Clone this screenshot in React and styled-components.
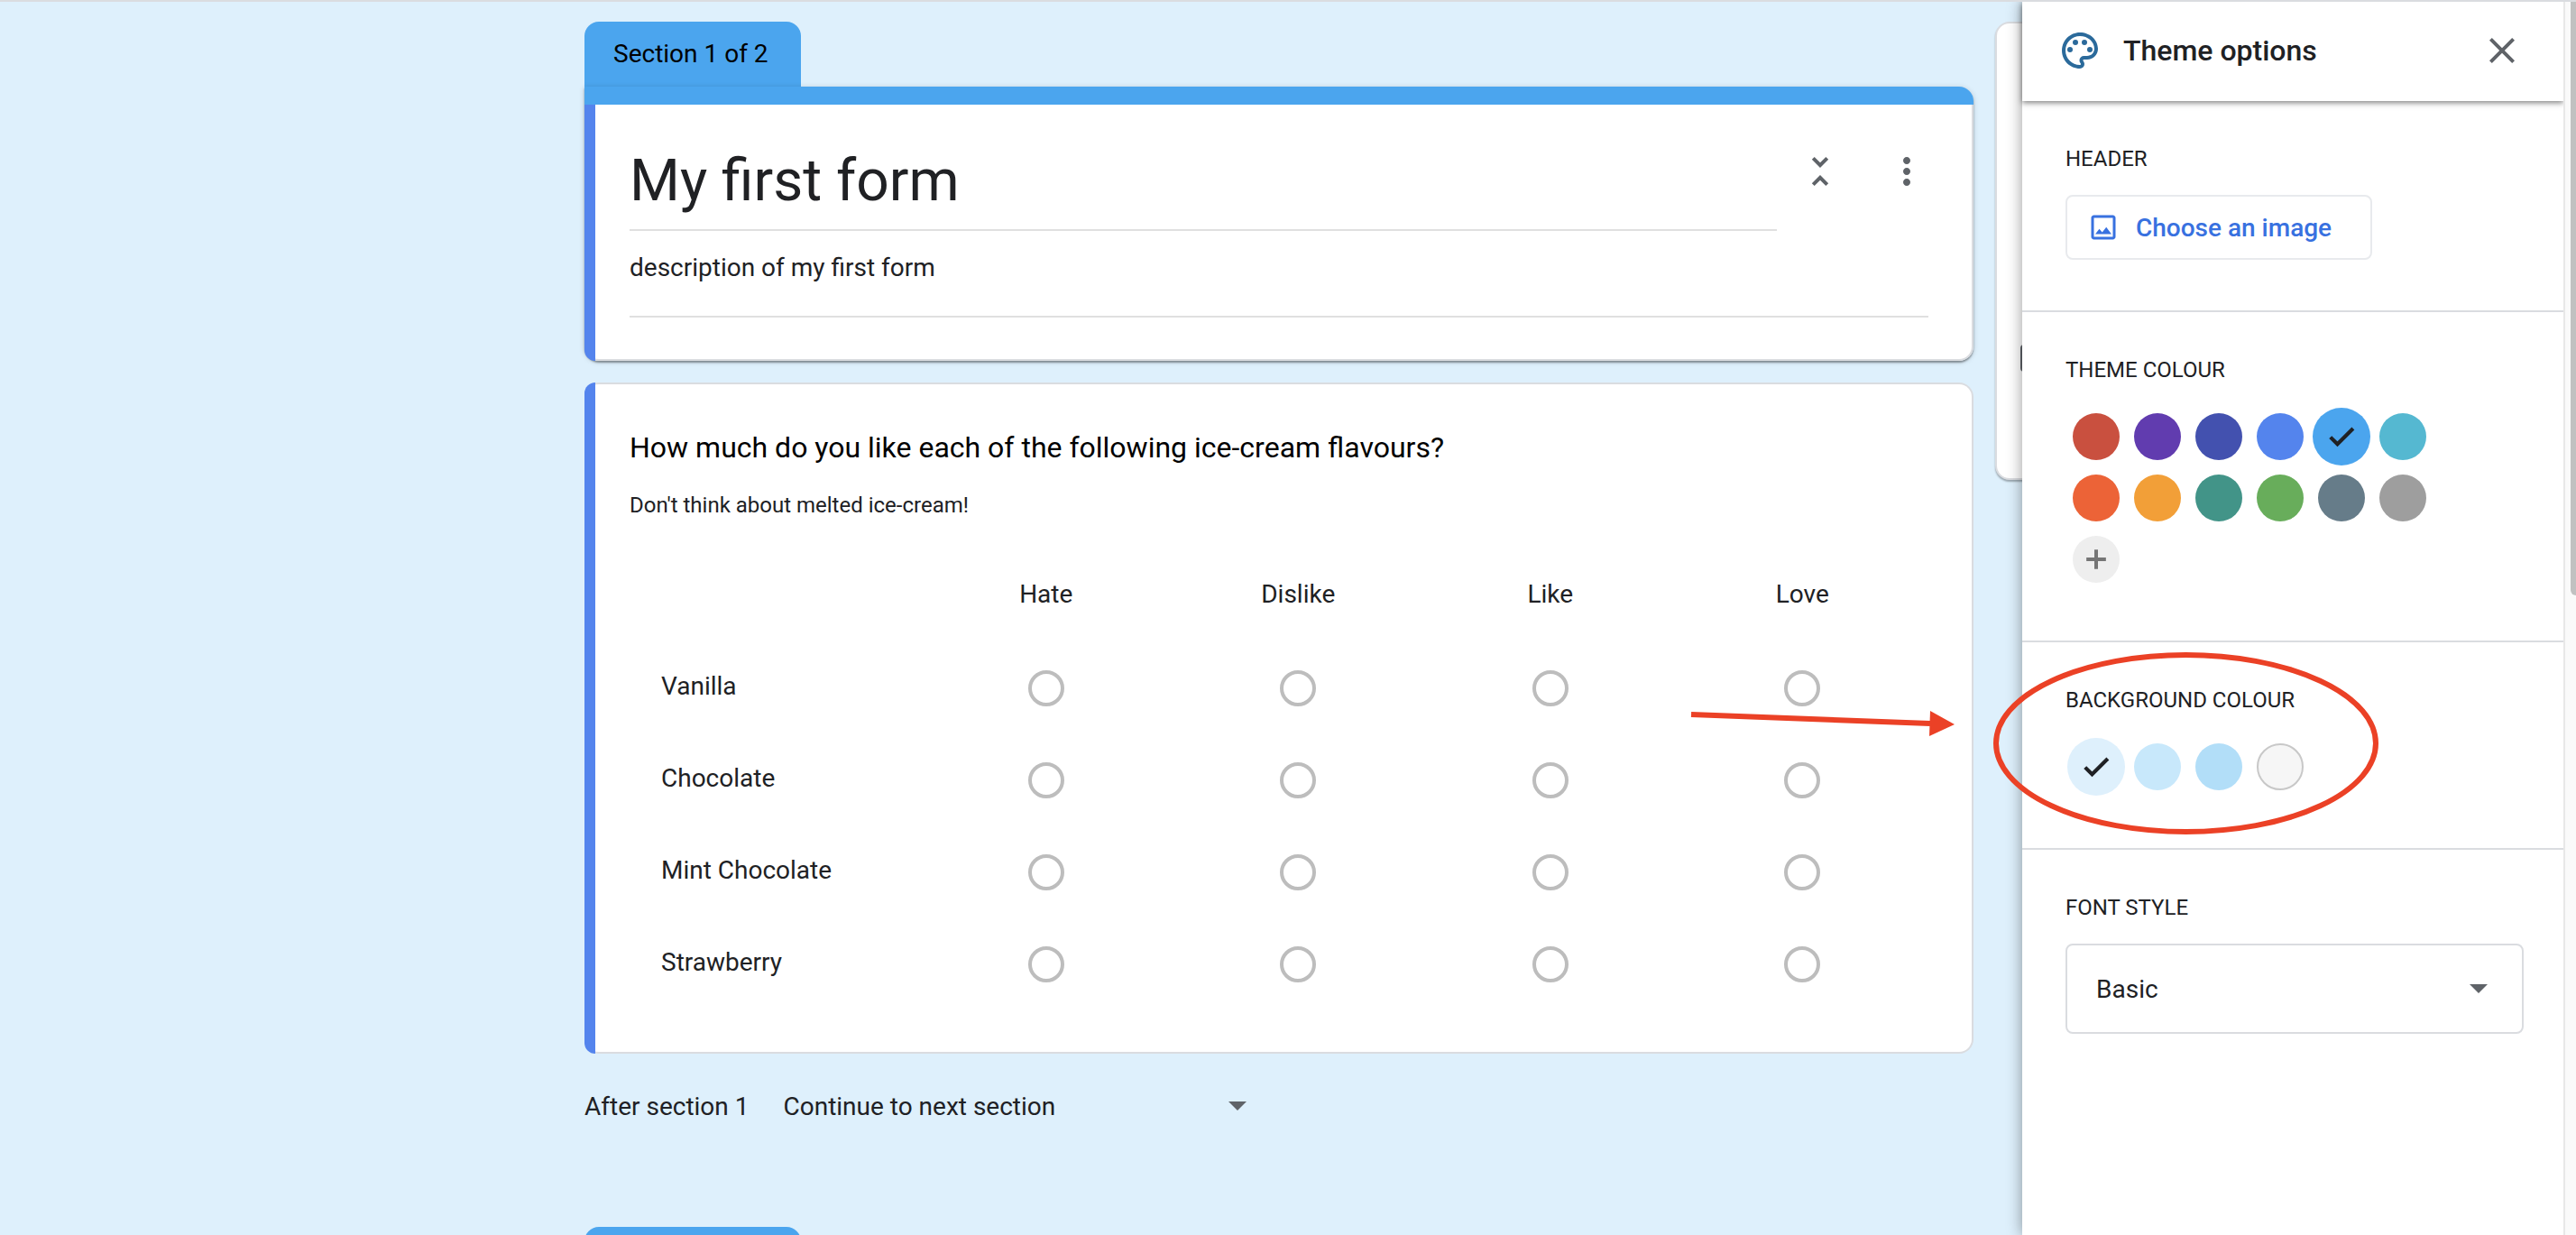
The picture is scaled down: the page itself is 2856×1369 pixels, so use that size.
import React, { useState } from "react";
import styled, { createGlobalStyle, css } from "styled-components";

const body = `Roboto, "Liberation Sans", sans-serif`;
const ink = "#202124";
const line = "#dadce0";
const accent = "#4ba5ee";
const marker = "#5484ed";
const annotation = "#eb4126";

const GlobalStyle = createGlobalStyle`
  *, *::before, *::after { box-sizing: border-box; }
  html, body, #root { height: 100%; }
  body { margin: 0; background: #def0fc; color: ${ink}; font-family: ${body}; overflow: hidden; }
  input, select, button { font-family: inherit; color: inherit; }
`;

const Page = styled.div`
  display: flex;
  height: 100%;
  border-top: 2px solid ${line};
  position: relative;
  overflow: hidden;
`;

const Main = styled.main`
  flex: 1;
  min-width: 0;
  padding: 22px 6px 0 0;
`;

const Column = styled.div`
  position: relative;
  width: 1540px;
  max-width: 100%;
  margin: 0 auto;
`;

const SectionTab = styled.h2`
  width: 240px;
  height: 72px;
  margin: 0;
  padding: 0 32px;
  border-radius: 16px 16px 0 0;
  background: ${accent};
  color: #000;
  font-size: 28px;
  font-weight: 400;
  line-height: 72px;
  white-space: nowrap;
`;

const Card = styled.section`
  position: relative;
  background: #fff;
  border: 2px solid ${line};
  border-left: 0;
  border-radius: 16px;

  &::before {
    content: "";
    position: absolute;
    top: -2px;
    bottom: -2px;
    left: 0;
    width: 12px;
    border-radius: 12px 0 0 12px;
    background: ${marker};
  }
`;

const IntroCard = styled(Card)`
  padding: 26px 24px 46px 50px;
  border-top: 0;
  border-radius: 0 0 16px 16px;

  &::before { top: 0; border-radius: 0 0 0 12px; }
`;

const Intro = styled.div`
  border-radius: 0 16px 16px 16px;
  box-shadow: 0 2px 2px rgba(0, 0, 0, 0.36), 0 1px 6px rgba(0, 0, 0, 0.16);
`;

const ColorBar = styled.div`
  height: 20px;
  border-radius: 0 16px 0 0;
  background: ${accent};
`;

const TitleRow = styled.div`
  display: flex;
  align-items: flex-start;
`;

const TextField = styled.input`
  display: block;
  min-width: 0;
  border: 0;
  border-bottom: 2px solid #e0e0e0;
  background: none;
  outline: none;
`;

const TitleField = styled(TextField)`
  flex: 1;
  height: 114px;
  padding: 18px 0 14px;
  font-size: 64px;
  line-height: 80px;
`;

const DescriptionField = styled(TextField)`
  width: calc(100% - 24px);
  height: 76px;
  margin-top: 20px;
  padding: 0 0 34px;
  font-size: 28px;
  line-height: 40px;
`;

const IconButton = styled.button`
  display: grid;
  place-items: center;
  flex: none;
  width: 96px;
  height: 96px;
  padding: 0;
  border: 0;
  background: none;
  color: #5f6368;
`;

const QuestionCard = styled(Card)`
  margin-top: 24px;
  padding: 46px 48px 46px 50px;
`;

const QuestionTitle = styled.h3`
  margin: 0 0 24px;
  color: #000;
  font-size: 32px;
  font-weight: 400;
  line-height: 48px;
`;

const QuestionHint = styled.p`
  margin: 0 0 34px;
  font-size: 24px;
  line-height: 32px;
`;

const Grid = styled.table`
  width: 100%;
  table-layout: fixed;
  border-collapse: collapse;
  font-size: 28px;
  line-height: 40px;

  th, td { height: 102px; padding: 0; font-weight: 400; text-align: center; }
  th { padding-bottom: 4px; }
  tbody th { padding-left: 35px; text-align: left; }
  thead td { width: 322px; }
`;

const GridRadio = styled.input`
  appearance: none;
  display: block;
  width: 40px;
  height: 40px;
  margin: 0 auto;
  border: 4px solid #bdbdbd;
  border-radius: 50%;
  background: #fff;
  &:checked { background: radial-gradient(${accent} 45%, #fff 50%); }
`;

const AfterSection = styled.div`
  display: flex;
  align-items: center;
  gap: 38px;
  height: 64px;
  margin: 26px 0 102px;
  font-size: 28px;
`;

const SelectBox = styled.div`
  display: flex;
  align-items: center;
  position: relative;
  svg { position: absolute; right: 40px; pointer-events: none; }
`;

const Select = styled.select`
  appearance: none;
  width: 100%;
  height: 100px;
  padding: 0 80px 0 32px;
  border: 2px solid ${line};
  border-radius: 8px;
  background: #fff;
  font-size: 28px;
`;

const PlainBox = styled(SelectBox)`
  width: 530px;
  svg { right: 16px; }
`;

const PlainSelect = styled(Select)`
  height: 64px;
  padding: 0;
  border: 0;
  background: none;
`;

const FloatingTools = styled.aside`
  position: absolute;
  top: 0;
  left: calc(100% + 24px);
  display: flex;
  flex-direction: column;
  justify-content: flex-end;
  width: 96px;
  height: 508px;
  padding: 0 26px 118px;
  border: 2px solid ${line};
  border-radius: 16px;
  background: #fff;
  box-shadow: 0 2px 2px rgba(0, 0, 0, 0.3);
`;

const ToolGlyph = styled.span`
  height: 30px;
  border: 4px solid #5f6368;
  border-radius: 4px;
`;

const Panel = styled.aside`
  position: absolute;
  top: 0;
  right: 14px;
  bottom: 0;
  width: 600px;
  background: #fff;
  box-shadow: 0 0 16px rgba(0, 0, 0, 0.4);
  clip-path: inset(0 0 0 -32px);
`;

const PanelHeader = styled.header`
  display: flex;
  align-items: center;
  gap: 24px;
  height: 110px;
  padding: 0 20px 2px 40px;
  box-shadow: 0 2px 6px rgba(0, 0, 0, 0.5);
  color: #2b6a9b;
`;

const PanelTitle = styled.h2`
  flex: 1;
  margin: 0;
  color: ${ink};
  font-size: 32px;
  font-weight: 500;
`;

const PanelSection = styled.section`
  padding: 48px 44px 56px 48px;
  & + & { border-top: 2px solid ${line}; }
`;

const PanelLabel = styled.h3`
  display: block;
  margin: 0 0 24px;
  font-size: 24px;
  font-weight: 400;
  line-height: 32px;
`;

const ImageButton = styled.button`
  display: flex;
  align-items: center;
  gap: 18px;
  width: 340px;
  height: 72px;
  padding: 0 22px;
  border: 2px solid #e8eaed;
  border-radius: 8px;
  background: #fff;
  color: #3871e0;
  font-size: 28px;
  font-weight: 500;
`;

const Swatches = styled.div`
  display: grid;
  grid-template-columns: repeat(6, 68px);
  grid-auto-rows: 68px;
`;

const SwatchCell = styled.label`
  display: grid;
  place-items: center;
  > * { grid-area: 1 / 1; }
  svg { pointer-events: none; }
`;

const round = css`
  width: 52px;
  height: 52px;
  margin: 0;
  padding: 0;
  border-radius: 50%;
`;

const Swatch = styled.input`
  appearance: none;
  ${round}
  border: ${(p) => (p.$outlined ? "2px solid #c8c8c8" : "0")};
  background: ${(p) => p.$color};
  &:checked { width: 64px; height: 64px; }
`;

const AddSwatch = styled.button`
  ${round}
  display: grid;
  place-items: center;
  place-self: center;
  border: 0;
  background: #eee;
  color: #757575;
`;

const ScrollTrack = styled.div`
  flex: none;
  width: 14px;
  padding-left: 6px;
  border-left: 2px solid #e8e8e8;
  background: #fafafa;
`;

const ScrollThumb = styled.div`
  height: 658px;
  border-radius: 0 0 0 8px;
  background: #c1c1c1;
`;

const Annotations = styled.svg`
  position: absolute;
  top: 718px;
  right: 206px;
  pointer-events: none;
`;

const Glyph = ({ d, size = 48, weight = 0 }) => (
  <svg
    width={size}
    height={size}
    viewBox="0 0 24 24"
    fill="currentColor"
    stroke={weight ? "currentColor" : "none"}
    strokeWidth={weight}
    aria-hidden="true"
  >
    <path d={d} />
  </svg>
);

const paths = {
  collapse: "M7.41 18.59 8.83 20 12 16.83 15.17 20l1.41-1.41L12 14l-4.59 4.59zm9.18-13.18L15.17 4 12 7.17 8.83 4 7.41 5.41 12 10l4.59-4.59z",
  more: "M12 8c1.1 0 2-.9 2-2s-.9-2-2-2-2 .9-2 2 .9 2 2 2zm0 2c-1.1 0-2 .9-2 2s.9 2 2 2 2-.9 2-2-.9-2-2-2zm0 6c-1.1 0-2 .9-2 2s.9 2 2 2 2-.9 2-2-.9-2-2-2z",
  close: "M19 6.41 17.59 5 12 10.59 6.41 5 5 6.41 10.59 12 5 17.59 6.41 19 12 13.41 17.59 19 19 17.59 13.41 12z",
  palette: "M12 22C6.49 22 2 17.51 2 12S6.49 2 12 2s10 4.04 10 9c0 3.31-2.69 6-6 6h-1.77c-.28 0-.5.22-.5.5 0 .12.05.23.13.33.41.47.64 1.06.64 1.67A2.5 2.5 0 0 1 12 22zm0-18c-4.41 0-8 3.59-8 8s3.59 8 8 8c.28 0 .5-.22.5-.5a.54.54 0 0 0-.14-.35c-.41-.46-.63-1.05-.63-1.65a2.5 2.5 0 0 1 2.5-2.5H16c2.21 0 4-1.79 4-4 0-3.86-3.59-7-8-7z",
  image: "M19 5v14H5V5h14m0-2H5c-1.1 0-2 .9-2 2v14c0 1.1.9 2 2 2h14c1.1 0 2-.9 2-2V5c0-1.1-.9-2-2-2zm-4.86 8.86-3 3.87L9 13.14 6 17h12l-3.86-5.14z",
  check: "M9 16.17 4.83 12l-1.42 1.41L9 19 21 7l-1.41-1.41z",
  plus: "M18.5 13.2h-5.3v5.3h-2.4v-5.3H5.5v-2.4h5.3V5.5h2.4v5.3h5.3z",
};

const Palette = () => (
  <svg width="48" height="48" viewBox="0 0 24 24" fill="currentColor" aria-hidden="true">
    <path d={paths.palette} />
    <circle cx="6.5" cy="11.5" r="1.5" />
    <circle cx="9.5" cy="7.5" r="1.5" />
    <circle cx="14.5" cy="7.5" r="1.5" />
    <circle cx="17.5" cy="11.5" r="1.5" />
  </svg>
);

const Caret = () => (
  <svg width="20" height="10" viewBox="0 0 20 10" fill="#5f6368" aria-hidden="true">
    <path d="M0 0h20L10 10z" />
  </svg>
);

const themeColors = [
  ["Red", "#c9503f"], ["Purple", "#613caf"], ["Indigo", "#4351af"],
  ["Cornflower", "#5484ed"], ["Light blue", "#4ba5ee"], ["Cyan", "#55b8d1"],
  ["Orange", "#ec6337"], ["Amber", "#f29f38"], ["Teal", "#429488"],
  ["Green", "#68ad5b"], ["Blue grey", "#667c89"], ["Grey", "#9e9e9e"],
];

const backgroundColors = [
  ["Pale blue", "#def0fc"], ["Soft blue", "#c8e8fb"],
  ["Sky blue", "#b2def8"], ["Light grey", "#f6f6f6"],
];

const answers = ["Hate", "Dislike", "Like", "Love"];
const flavours = ["Vanilla", "Chocolate", "Mint Chocolate", "Strawberry"];

function SwatchGroup({ name, colors, initial, label, children }) {
  const [selected, setSelected] = useState(initial);
  return (
    <Swatches role="group" aria-labelledby={label}>
      {colors.map(([title, color]) => (
        <SwatchCell key={title}>
          <Swatch
            type="radio"
            name={name}
            aria-label={title}
            checked={selected === title}
            onChange={() => setSelected(title)}
            $color={color}
            $outlined={title === "Light grey"}
          />
          {selected === title && <Glyph d={paths.check} size={36} weight={0.8} />}
        </SwatchCell>
      ))}
      {children}
    </Swatches>
  );
}

export default function App() {
  return (
    <>
      <GlobalStyle />
      <Page>
        <Main>
          <Column>
            <SectionTab>Section 1 of 2</SectionTab>
            <Intro>
              <ColorBar />
              <IntroCard>
                <TitleRow>
                  <TitleField aria-label="Form title" defaultValue="My first form" />
                  <IconButton aria-label="Collapse section"><Glyph d={paths.collapse} /></IconButton>
                  <IconButton aria-label="More options"><Glyph d={paths.more} /></IconButton>
                </TitleRow>
                <DescriptionField aria-label="Form description" defaultValue="description of my first form" />
              </IntroCard>
            </Intro>

            <QuestionCard>
              <QuestionTitle>How much do you like each of the following ice-cream flavours?</QuestionTitle>
              <QuestionHint>Don't think about melted ice-cream!</QuestionHint>
              <Grid>
                <thead>
                  <tr>
                    <td />
                    {answers.map((a) => <th key={a} scope="col">{a}</th>)}
                  </tr>
                </thead>
                <tbody>
                  {flavours.map((f) => (
                    <tr key={f}>
                      <th scope="row">{f}</th>
                      {answers.map((a) => (
                        <td key={a}><GridRadio type="radio" name={f} aria-label={`${f}: ${a}`} /></td>
                      ))}
                    </tr>
                  ))}
                </tbody>
              </Grid>
            </QuestionCard>

            <AfterSection>
              <label htmlFor="after">After section 1</label>
              <PlainBox>
                <PlainSelect id="after"><option>Continue to next section</option></PlainSelect>
                <Caret />
              </PlainBox>
            </AfterSection>
            <SectionTab aria-label="Next section" />

            <FloatingTools aria-label="Add items"><ToolGlyph /></FloatingTools>
          </Column>
        </Main>
        <ScrollTrack><ScrollThumb /></ScrollTrack>

        <Panel>
          <PanelHeader>
            <Palette />
            <PanelTitle>Theme options</PanelTitle>
            <IconButton aria-label="Close"><Glyph d={paths.close} /></IconButton>
          </PanelHeader>
          <PanelSection>
            <PanelLabel>HEADER</PanelLabel>
            <ImageButton><Glyph d={paths.image} size={36} />Choose an image</ImageButton>
          </PanelSection>
          <PanelSection>
            <PanelLabel id="theme-label">THEME COLOUR</PanelLabel>
            <SwatchGroup name="theme" colors={themeColors} initial="Light blue" label="theme-label">
              <AddSwatch aria-label="Add custom colour"><Glyph d={paths.plus} size={40} /></AddSwatch>
            </SwatchGroup>
          </PanelSection>
          <PanelSection>
            <PanelLabel id="background-label">BACKGROUND COLOUR</PanelLabel>
            <SwatchGroup name="background" colors={backgroundColors} initial="Pale blue" label="background-label" />
          </PanelSection>
          <PanelSection>
            <PanelLabel as="label" htmlFor="font">FONT STYLE</PanelLabel>
            <SelectBox>
              <Select id="font"><option>Basic</option></Select>
              <Caret />
            </SelectBox>
          </PanelSection>
        </Panel>

        <Annotations width="780" height="212" viewBox="1870 720 780 212" fill="none" aria-hidden="true">
          <ellipse cx="2423.5" cy="824" rx="210.5" ry="98" stroke={annotation} strokeWidth="6" />
          <path d="M1875 792 2140 802" stroke={annotation} strokeWidth="6" />
          <path d="M2140 788 2167 803 2139 816z" fill={annotation} />
        </Annotations>
      </Page>
    </>
  );
}
